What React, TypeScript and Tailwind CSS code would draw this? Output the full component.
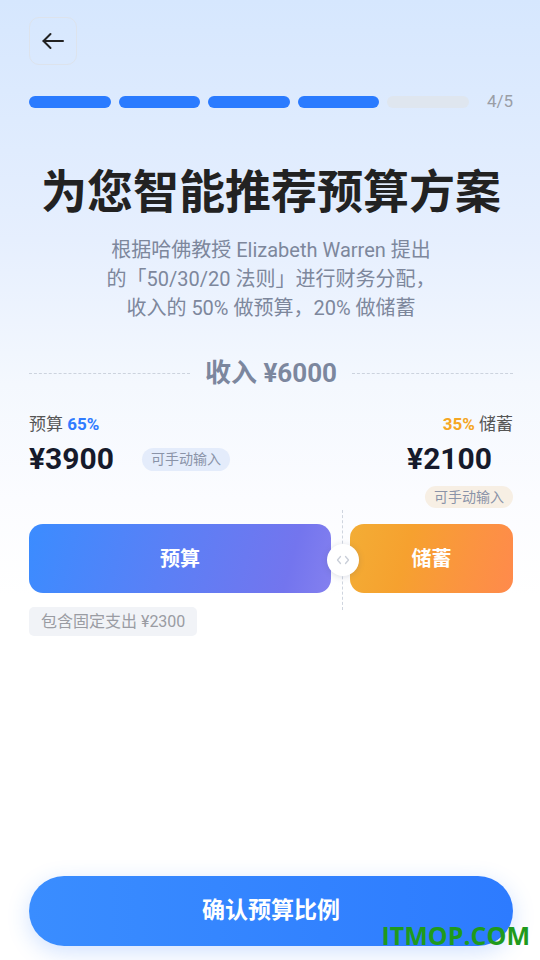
import React from 'react'

const FONT = { fontFamily: 'Roboto, "Noto Sans CJK SC", sans-serif' }

function BackArrow() {
  return (
    <svg width="24" height="24" viewBox="0 0 24 24" fill="none" stroke="#222" strokeWidth="2" strokeLinecap="round" strokeLinejoin="round">
      <path d="M22 12H2.5" />
      <path d="M9.5 5L2.5 12l7 7" />
    </svg>
  )
}

function Handle() {
  return (
    <div className="w-8 h-8 rounded-full bg-white shadow-[0_1px_6px_rgba(60,70,110,0.18)] flex items-center justify-center">
      <svg width="14" height="10" viewBox="0 0 14 10" fill="none" stroke="#c9ced8" strokeWidth="1.3" strokeLinecap="round" strokeLinejoin="round">
        <path d="M4.5 1.5L1.5 5l3 3.5" />
        <path d="M9.5 1.5L12.5 5l-3 3.5" />
      </svg>
    </div>
  )
}

export default function App() {
  const steps = [true, true, true, true, false]

  return (
    <div
      className="relative h-[960px] w-full flex flex-col pl-[29px] pr-[27px] bg-[linear-gradient(180deg,#d6e7fe_0%,#e6effe_25%,#f4f8fe_40%,#fbfcff_52%,#ffffff_62%)] overflow-hidden"
      style={FONT}
    >
      {/* back */}
      <div className="pt-[17px]">
        <button
          type="button"
          className="w-12 h-12 rounded-[10px] border border-[#dde3ec] bg-transparent flex items-center justify-center"
        >
          <BackArrow />
        </button>
      </div>

      {/* progress */}
      <div className="mt-[28px] flex items-center">
        <div className="flex gap-2 w-[440px]">
          {steps.map((on, i) => (
            <div key={i} className={`flex-1 h-3 rounded-full ${on ? 'bg-[#2a7bff]' : 'bg-[#dfe6ef]'}`} />
          ))}
        </div>
        <span className="ml-auto text-[17px] text-[#9a9ea6] leading-none">4/5</span>
      </div>

      {/* title */}
      <h1 className="mt-[54px] text-center text-[46px] leading-[56px] font-bold text-[#222]">
        为您智能推荐预算方案
      </h1>

      <p className="mt-[16px] text-center text-[20px] leading-[29px] text-[#7d879c]">
        根据哈佛教授 Elizabeth Warren 提出
        <br />
        的「50/30/20 法则」进行财务分配，
        <br />
        收入的 50% 做预算，20% 做储蓄
      </p>

      {/* income */}
      <div className="mt-[33px] flex items-center">
        <div className="flex-1 border-t border-dashed border-[#ccd3de]" />
        <span className="px-[15px] text-[26px] leading-[34px] font-bold text-[#7c879e]">收入 ¥6000</span>
        <div className="flex-1 border-t border-dashed border-[#ccd3de]" />
      </div>

      {/* split values */}
      <div className="mt-[24px] flex justify-between">
        <div className="flex flex-col">
          <div className="text-[17px] leading-[20px] text-[#555]">
            预算 <span className="font-bold text-[#2f7bff]">65%</span>
          </div>
          <div className="mt-[7px] flex items-center">
            <span className="text-[30px] leading-[36px] font-bold text-[#161a2b]">¥3900</span>
            <span className="ml-[28px] h-[23px] px-[9px] rounded-full bg-[#e4ecfb] text-[14px] leading-[23px] text-[#8a93a8]">
              可手动输入
            </span>
          </div>
        </div>
        <div className="flex flex-col items-end">
          <div className="text-[17px] leading-[20px] text-[#555]">
            <span className="font-bold text-[#f5a623]">35%</span> 储蓄
          </div>
          <span className="mt-[7px] mr-[21px] text-[30px] leading-[36px] font-bold text-[#161a2b]">¥2100</span>
          <span className="mt-[9px] h-[22px] px-[9px] rounded-full bg-[#f7efe4] text-[14px] leading-[22px] text-[#8a93a8]">
            可手动输入
          </span>
        </div>
      </div>

      {/* bars */}
      <div className="mt-[16px] flex items-stretch h-[69px]">
        <div className="w-[302px] rounded-[14px] bg-[linear-gradient(105deg,#3b8cff_0%,#5a80f6_45%,#7375ee_85%,#8480ef_100%)] flex items-center justify-center">
          <span className="text-[20px] font-bold text-white">预算</span>
        </div>
        <div className="relative w-[19px]">
          <div className="absolute left-[11px] top-[-14px] bottom-[-17px] border-l border-dashed border-[#cfd5df]" />
          <div className="absolute left-[-4px] top-[20px]">
            <Handle />
          </div>
        </div>
        <div className="flex-1 rounded-[14px] bg-[linear-gradient(105deg,#f3ad35_0%,#f6a12f_35%,#fb9440_70%,#ff8a4c_100%)] flex items-center justify-center">
          <span className="text-[20px] font-bold text-white">储蓄</span>
        </div>
      </div>

      <div className="mt-[14px]">
        <span className="inline-block h-[29px] px-3 rounded-[5px] bg-[#f1f3f7] text-[16px] leading-[29px] text-[#9a9ca3]">
          包含固定支出 ¥2300
        </span>
      </div>

      {/* confirm */}
      <button
        type="button"
        className="mt-auto mb-[14px] h-[70px] w-full rounded-full bg-[linear-gradient(90deg,#3a8dff_0%,#2d7bff_100%)] shadow-[0_6px_22px_rgba(45,123,255,0.22)] text-[23px] font-bold text-white"
      >
        确认预算比例
      </button>

      <span className="absolute right-[10px] bottom-[11px] text-[25px] leading-[28px] font-bold text-[#1f9a1c]" style={{ fontFamily: '"Open Sans", sans-serif' }}>
        ITMOP.COM
      </span>
    </div>
  )
}
